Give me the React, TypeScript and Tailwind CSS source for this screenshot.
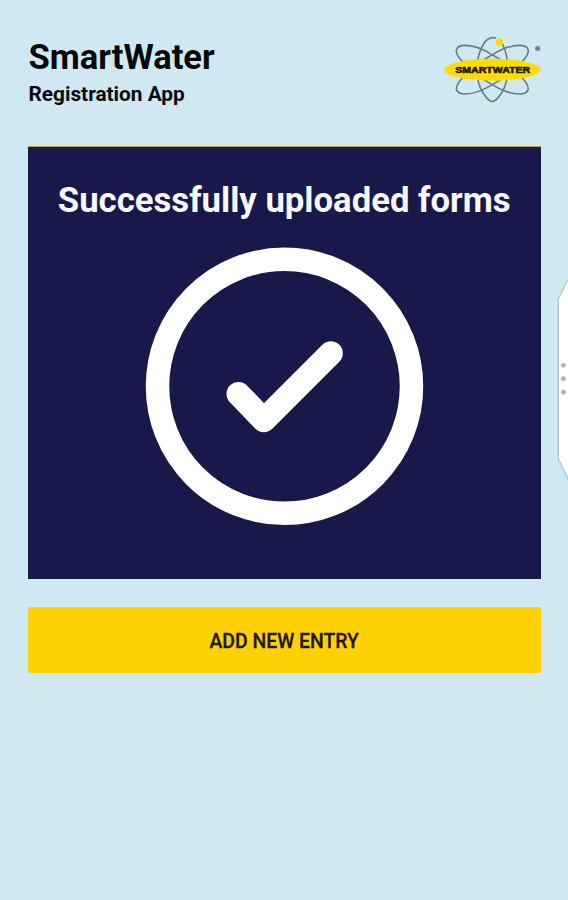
function Logo() {
  return (
    <svg width="108" height="72" viewBox="438 34 108 72" className="-mr-[5.5px] shrink-0">
      <g fill="none" stroke="#6b7b84" strokeWidth="1.6">
        <path d="M496 38C490.500 36.600 486.500 39 483.500 44C475 58 475 80 482.500 92C485.500 97 489 101.500 492.300 101.500C495.600 101.500 499.100 97 502.100 92C509.500 80 509.500 58 502.500 44" />
        <path d="M461 60C454 52 454.500 45.500 465.500 45.400C474 45.500 484 49.500 492.300 54.800C503 60.500 517 70.500 523.600 79.400C530.500 87.500 530 94 519.100 94C510 93.900 501 90 492.300 84.600C481 78.500 468 69 461 60Z" />
        <path d="M523.600 60C530.600 52 530.100 45.500 519.100 45.400C510.600 45.500 500.600 49.500 492.300 54.800C481.600 60.500 467.600 70.500 461 79.400C454.100 87.500 454.600 94 465.500 94C474.600 93.900 483.600 90 492.300 84.600C503.600 78.500 516.600 69 523.600 60Z" />
      </g>
      <ellipse cx="492.4" cy="69.7" rx="48.2" ry="11" fill="#ffdc05" />
      <circle cx="499.3" cy="42" r="3.7" fill="#ffd90a" />
      <text
        x="492.7"
        y="72.8"
        textAnchor="middle"
        textLength="75"
        lengthAdjust="spacingAndGlyphs"
        className="fill-[#1c1a08] stroke-[#1c1a08] font-['Liberation_Sans',sans-serif] text-[8.5px] font-bold"
        strokeWidth="0.6"
      >
        SMARTWATER
      </text>
      <circle cx="537.7" cy="48.5" r="2.7" fill="#8795a0" />
      <circle cx="537.7" cy="48.5" r="1.3" fill="#66757f" />
    </svg>
  );
}

function SuccessMark() {
  return (
    <svg width="280" height="280" viewBox="144.2 246 280 280" className="mx-auto block" fill="none" stroke="#fff">
      <circle cx="284.7" cy="386.3" r="127" strokeWidth="23.5" />
      <path d="M238.7 394 264 420.2 331 353.3" strokeWidth="24" strokeLinecap="round" strokeLinejoin="round" />
    </svg>
  );
}

function EdgeHandle() {
  return (
    <svg width="12" height="204" viewBox="556 277 12 204" className="absolute right-0 top-[277px]">
      <path d="M569 277.5 558.3 299V459L569 480.5" fill="#fff" stroke="#b9c3cb" strokeWidth="1.4" />
      <g fill="#b1b1b3">
        <circle cx="563.4" cy="365.3" r="2.4" />
        <circle cx="563.4" cy="378.7" r="2.4" />
        <circle cx="563.4" cy="392.2" r="2.4" />
      </g>
    </svg>
  );
}

export default function App() {
  return (
    <div className="relative h-[900px] w-[568px] overflow-hidden bg-[#d0e8f2] pt-[34px] pr-[27.5px] pl-7 font-['Roboto',sans-serif] text-[#06090c]">
      <header className="flex h-[112px] items-start justify-between">
        <div className="pt-[3px] pl-[0.5px]">
          <h1 className="whitespace-nowrap text-[34.6px] leading-10 font-bold">SmartWater</h1>
          <p className="whitespace-nowrap pt-[3px] text-[20.8px] leading-7 font-bold">Registration App</p>
        </div>
        <Logo />
      </header>
      <section className="h-[433px] border-t-[1.5px] border-[#b9a83c] bg-[#18184a] pt-[33px]">
        <h2 className="whitespace-nowrap text-center text-[34.7px] leading-10 font-bold text-[#f8f8ff]">
          Successfully uploaded forms
        </h2>
        <div className="pt-[26px]">
          <SuccessMark />
        </div>
      </section>
      <button className="mt-7 block h-[66px] w-full rounded-[3px] bg-[#ffd003] pt-[3px] text-[19.4px] font-medium text-[#1b1703] [-webkit-text-stroke:0.3px_#1b1703]">
        ADD NEW ENTRY
      </button>
      <EdgeHandle />
    </div>
  );
}
